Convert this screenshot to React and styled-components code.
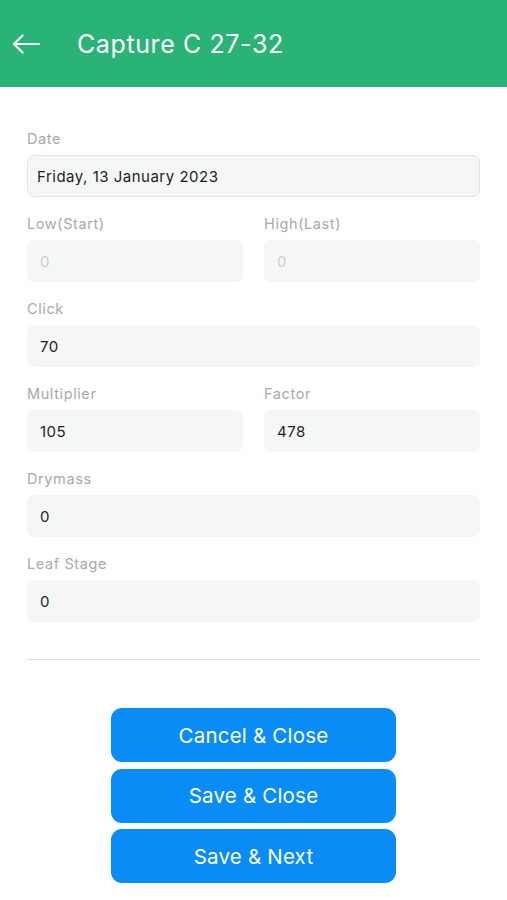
import React from "react";
import styled, { createGlobalStyle } from "styled-components";

const Global = createGlobalStyle`
  html, body { margin: 0; padding: 0; background: #fff; }
  body { font-family: Inter, "Liberation Sans", Arial, sans-serif; -webkit-font-smoothing: antialiased; }
  * { box-sizing: border-box; }
`;

const Page = styled.div`
  width: 507px;
  min-height: 900px;
  background: #fff;
  display: flex;
  flex-direction: column;
`;

const Header = styled.header`
  height: 87px;
  background: #2ab377;
  display: flex;
  align-items: center;
  padding: 0 0 0 12px;
  gap: 36px;
  color: #fff;
`;

const BackIcon = styled.svg`
  width: 29px;
  height: 20px;
  display: block;
`;

const Title = styled.h1`
  margin: 0;
  font-size: 25px;
  font-weight: 400;
  letter-spacing: 0.6px;
  color: #fff;
`;

const Form = styled.div`
  padding: 43px 27px 0;
  display: flex;
  flex-direction: column;
  gap: 18px;
`;

const Row = styled.div`
  display: grid;
  grid-template-columns: ${p => (p.$cols === 2 ? "1fr 1fr" : "1fr")};
  column-gap: 21px;
`;

const Field = styled.div`
  display: flex;
  flex-direction: column;
  gap: 8px;
`;

const Label = styled.label`
  font-size: 14.5px;
  line-height: 17px;
  letter-spacing: 0.6px;
  color: #a9a9a9;
`;

const Input = styled.div`
  height: 42px;
  display: flex;
  align-items: center;
  padding-left: ${p => (p.$bordered ? "9px" : "13px")};
  background: #f5f6f6;
  border: ${p => (p.$bordered ? "1px solid #e3e4e4" : "none")};
  border-radius: 7px;
  font-size: 15px;
  letter-spacing: 0.5px;
  color: ${p => (p.$disabled ? "#cfcfcf" : "#1e1e1e")};
`;

const Divider = styled.hr`
  margin: 37px 27px 0;
  border: none;
  border-top: 1px solid #e2e2e2;
`;

const Buttons = styled.div`
  margin-top: 48px;
  display: flex;
  flex-direction: column;
  align-items: center;
  gap: 6.5px;
`;

const Button = styled.button`
  width: 285px;
  height: 54px;
  border: none;
  border-radius: 11px;
  background: #0a8cf6;
  color: #fff;
  font-family: inherit;
  font-size: 20.5px;
  letter-spacing: 0.2px;
  font-weight: 400;
  cursor: pointer;
`;

const fields = [
  [{ label: "Date", value: "Friday, 13 January 2023", bordered: true }],
  [
    { label: "Low(Start)", value: "0", disabled: true },
    { label: "High(Last)", value: "0", disabled: true },
  ],
  [{ label: "Click", value: "70" }],
  [
    { label: "Multiplier", value: "105" },
    { label: "Factor", value: "478" },
  ],
  [{ label: "Drymass", value: "0" }],
  [{ label: "Leaf Stage", value: "0" }],
];

export default function App() {
  return (
    <Page>
      <Global />
      <Header>
        <BackIcon viewBox="0 0 29 20" fill="none" stroke="#fff" strokeWidth="2.2" strokeLinecap="round" strokeLinejoin="round">
          <path d="M2 10H27" />
          <path d="M10.5 1.5L2 10L10.5 18.5" />
        </BackIcon>
        <Title>Capture C 27-32</Title>
      </Header>
      <Form>
        {fields.map((row, i) => (
          <Row key={i} $cols={row.length}>
            {row.map(f => (
              <Field key={f.label}>
                <Label>{f.label}</Label>
                <Input $bordered={f.bordered} $disabled={f.disabled}>{f.value}</Input>
              </Field>
            ))}
          </Row>
        ))}
      </Form>
      <Divider />
      <Buttons>
        <Button>Cancel &amp; Close</Button>
        <Button>Save &amp; Close</Button>
        <Button>Save &amp; Next</Button>
      </Buttons>
    </Page>
  );
}
